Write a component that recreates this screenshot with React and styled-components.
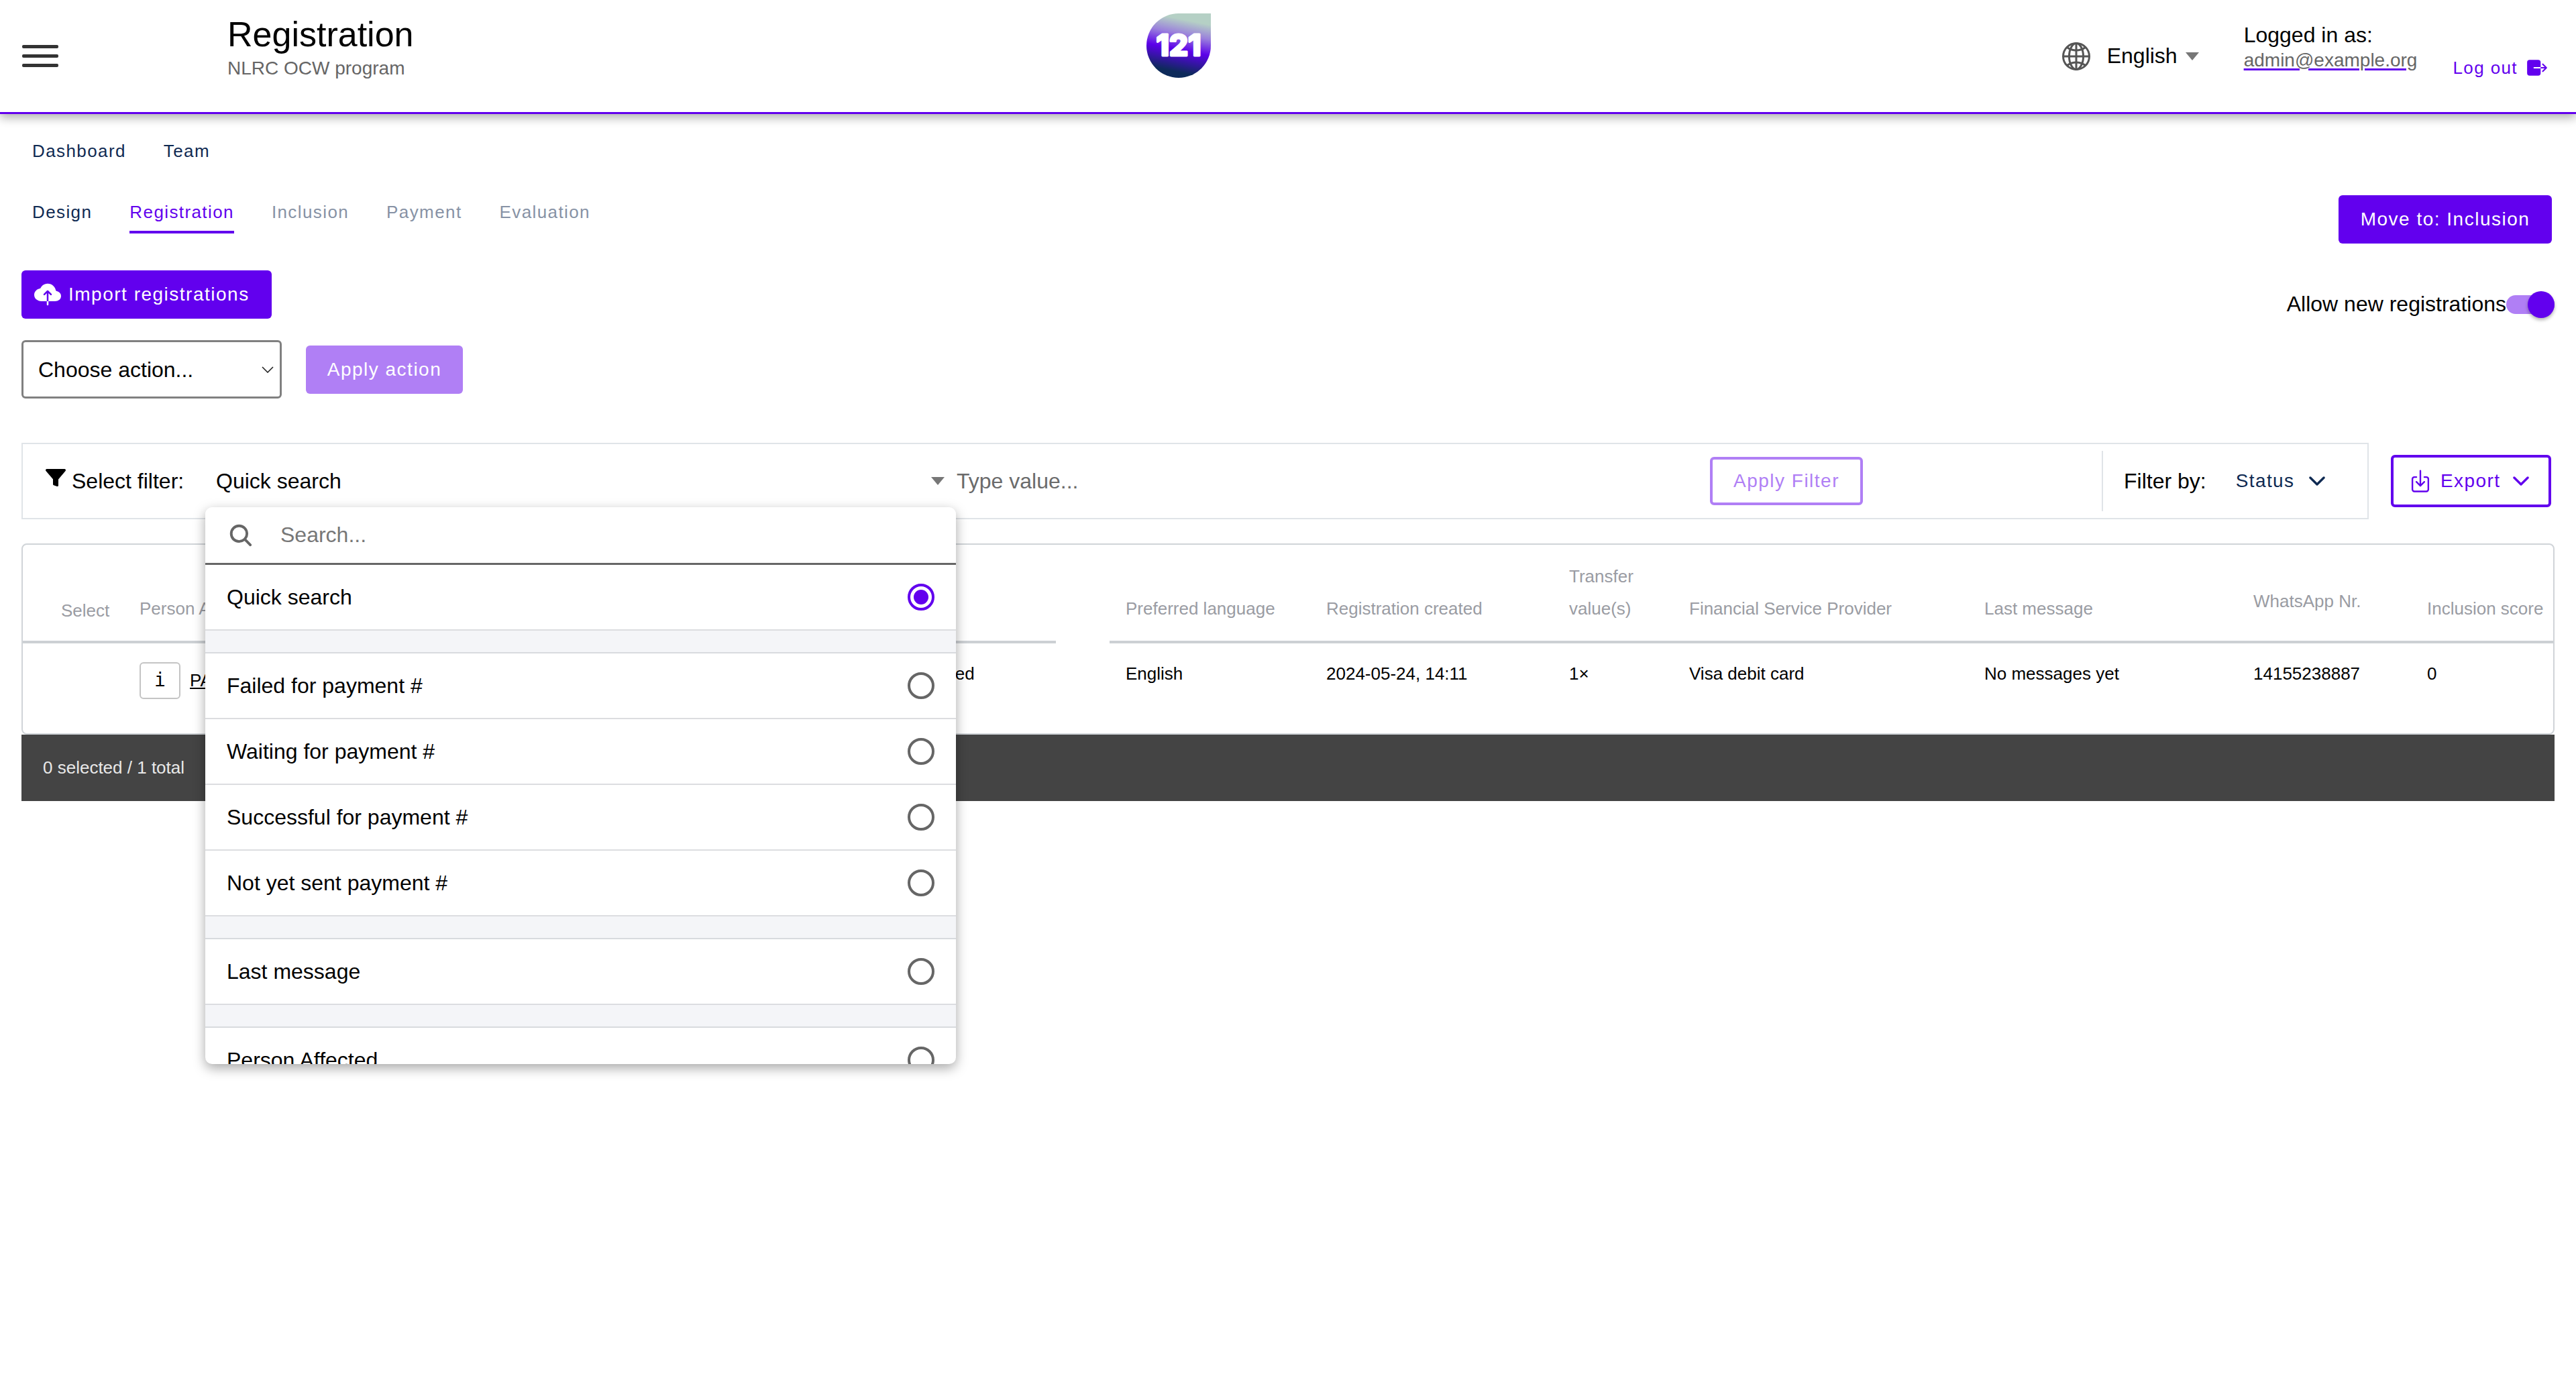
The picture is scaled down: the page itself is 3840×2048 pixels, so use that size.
import React from "react";
import styled, { createGlobalStyle } from "styled-components";
import {
  IoGlobeOutline,
  IoExit,
  IoCloudUpload,
  IoFunnel,
  IoSearch,
  IoChevronDown,
  IoDownloadOutline,
} from "react-icons/io5";

const PURPLE = "#6200ee";
const LIGHT_PURPLE = "#b07ff5";
const NAVY = "#0f2a52";

const selectArrow = encodeURIComponent(
  '<svg xmlns="http://www.w3.org/2000/svg" viewBox="0 0 18 10"><path d="M1 1l8 8 8-8" fill="none" stroke="#222" stroke-width="1.6"/></svg>'
);

const GlobalStyle = createGlobalStyle`
  html, body {
    margin: 0;
    background: #fff;
    font-family: "Liberation Sans", Arial, sans-serif;
    color: #000;
  }
  * { box-sizing: border-box; }
`;

const Page = styled.div`
  min-height: 2048px;
`;

/* header */
const Header = styled.header`
  display: flex;
  align-items: center;
  height: 170px;
  padding: 0 41px 0 33px;
  border-bottom: 3px solid ${PURPLE};
  box-shadow: 0 5px 14px rgba(0, 0, 0, 0.33);
`;
const Burger = styled.div`
  display: flex;
  flex-direction: column;
  gap: 9px;
  width: 54px;
`;
const BurgerBar = styled.span`
  height: 5px;
  border-radius: 2px;
  background: #333;
`;
const TitleBlock = styled.div`
  align-self: flex-start;
  margin: 21px 0 0 252px;
  width: 1370px;
`;
const Title = styled.h1`
  margin: 0;
  font-weight: normal;
  font-size: 52px;
  line-height: 60px;
`;
const Subtitle = styled.div`
  margin-top: 5px;
  font-size: 28px;
  line-height: 32px;
  color: #666;
`;
const LogoWrap = styled.svg`
  align-self: flex-start;
  margin-top: 20px;
  width: 96px;
  height: 96px;
  flex: none;
`;
const Lang = styled.div`
  display: flex;
  align-items: center;
  margin-left: auto;
  font-size: 32px;
  color: #000;
  svg {
    font-size: 48px;
    color: #555;
    margin-right: 22px;
  }
`;
const Caret = styled.span`
  width: 0;
  height: 0;
  margin-left: ${(p) => p.$gap || 12}px;
  border-left: 10px solid transparent;
  border-right: 10px solid transparent;
  border-top: 12px solid #777;
`;
const Account = styled.div`
  align-self: flex-start;
  margin: 34px 0 0 67px;
`;
const LoggedIn = styled.div`
  font-size: 32px;
  line-height: 36px;
`;
const Email = styled.a`
  display: block;
  margin-top: 2px;
  font-size: 28px;
  line-height: 36px;
  color: #666;
  text-decoration: underline ${PURPLE} 3px;
  text-underline-offset: 3px;
`;
const LogOut = styled.a`
  align-self: flex-start;
  display: flex;
  align-items: center;
  gap: 12px;
  margin: 84px 0 0 53px;
  font-size: 26px;
  line-height: 32px;
  letter-spacing: 1.4px;
  color: ${PURPLE};
  svg {
    font-size: 34px;
  }
`;

/* page content */
const Main = styled.main`
  padding: 0 32px;
`;
const NavRow = styled.nav`
  display: flex;
  gap: 56px;
  margin-top: 39px;
  padding-left: 16px;
`;
const NavLink = styled.a`
  font-size: 26px;
  line-height: 32px;
  letter-spacing: 1.4px;
  color: ${NAVY};
`;
const TabsRow = styled.div`
  display: flex;
  justify-content: space-between;
  margin-top: 50px;
  padding: 0 4px 0 16px;
`;
const Tabs = styled.div`
  display: flex;
  gap: 56px;
  padding-top: 9px;
`;
const Tab = styled.a`
  height: 48px;
  padding-bottom: 12px;
  font-size: 26px;
  line-height: 32px;
  letter-spacing: 1.4px;
  color: ${(p) => (p.$active ? PURPLE : p.$done ? NAVY : "#8792a5")};
  border-bottom: 4px solid ${(p) => (p.$active ? PURPLE : "transparent")};
`;
const Button = styled.button`
  display: inline-flex;
  align-items: center;
  justify-content: ${(p) => (p.$icon ? "flex-start" : "center")};
  width: ${(p) => p.$width}px;
  height: 72px;
  padding: 0 0 0 ${(p) => (p.$icon ? 19 : 0)}px;
  border: 0;
  border-radius: 6px;
  background: ${(p) => (p.$disabled ? LIGHT_PURPLE : PURPLE)};
  color: #fff;
  font-family: inherit;
  font-size: 28px;
  letter-spacing: 1.5px;
  svg {
    font-size: 40px;
    margin-right: 11px;
  }
`;
const ActionsRow = styled.div`
  display: flex;
  justify-content: space-between;
  align-items: flex-start;
  margin-top: 40px;
`;
const ActionsColumn = styled.div`
  display: flex;
  flex-direction: column;
  align-items: flex-start;
  gap: 32px;
`;
const SelectRow = styled.div`
  display: flex;
  align-items: center;
  gap: 36px;
`;
const ActionSelect = styled.select`
  appearance: none;
  width: 388px;
  height: 87px;
  padding-left: 22px;
  border: 3px solid #808080;
  border-radius: 6px;
  background: #fff url("data:image/svg+xml,${selectArrow}") no-repeat right 9px center / 18px 10px;
  font-family: inherit;
  font-size: 32px;
  color: #000;
`;
const ToggleRow = styled.label`
  display: flex;
  align-items: center;
  margin-top: 32px;
  font-size: 32px;
`;
const Toggle = styled.span`
  position: relative;
  display: block;
  width: 72px;
  height: 28px;
  border-radius: 14px;
  background: ${LIGHT_PURPLE};
  &::after {
    content: "";
    position: absolute;
    right: 0;
    top: -6px;
    width: 40px;
    height: 40px;
    border-radius: 50%;
    background: ${PURPLE};
    box-shadow: 0 3px 5px rgba(0, 0, 0, 0.3);
  }
`;

/* filter bar */
const FilterRow = styled.div`
  display: flex;
  align-items: center;
  margin-top: 66px;
  padding-right: 5px;
`;
const FilterBar = styled.div`
  position: relative;
  flex: 1;
  display: flex;
  align-items: center;
  height: 114px;
  padding-left: 33px;
  border: 2px solid #e0e4e8;
  font-size: 32px;
`;
const FunnelIcon = styled(IoFunnel)`
  flex: none;
  width: 32px;
  height: 32px;
  margin: -10px 8px 0 0;
`;
const FilterLabel = styled.span`
  flex: none;
  width: 215px;
`;
const QuickSelect = styled.div`
  flex: none;
  display: flex;
  align-items: center;
  justify-content: space-between;
  width: 1086px;
`;
const ValueInput = styled.span`
  flex: 1;
  margin-left: 18px;
  color: #6b6b6b;
`;
const ApplyFilter = styled.button`
  flex: none;
  width: 228px;
  height: 72px;
  margin-right: 356px;
  border: 4px solid ${LIGHT_PURPLE};
  border-radius: 6px;
  background: #fff;
  color: ${LIGHT_PURPLE};
  font-family: inherit;
  font-size: 28px;
  letter-spacing: 1.5px;
`;
const FilterBy = styled.div`
  flex: none;
  display: flex;
  align-items: center;
  width: 396px;
  height: 90px;
  padding-left: 31px;
  border-left: 2px solid #e0e4e8;
`;
const StatusSelect = styled.span`
  display: flex;
  align-items: center;
  gap: 16px;
  margin-left: 44px;
  font-size: 28px;
  letter-spacing: 1.4px;
  color: ${NAVY};
  svg {
    font-size: 36px;
  }
`;
const ExportButton = styled.button`
  flex: none;
  display: flex;
  align-items: center;
  width: 239px;
  height: 78px;
  margin-left: 33px;
  padding: 0 0 0 21px;
  border: 4px solid ${PURPLE};
  border-radius: 6px;
  background: #fff;
  color: ${PURPLE};
  font-family: inherit;
  font-size: 28px;
  letter-spacing: 1.4px;
  svg:first-child {
    font-size: 38px;
    margin-right: 11px;
  }
  svg:last-child {
    font-size: 36px;
    margin-left: 13px;
  }
`;

/* dropdown */
const Dropdown = styled.div`
  position: absolute;
  z-index: 5;
  left: 272px;
  top: 94px;
  width: 1119px;
  height: 830px;
  overflow: hidden;
  border-radius: 10px;
  background: #fff;
  box-shadow: 0 6px 18px rgba(0, 0, 0, 0.35);
`;
const SearchRow = styled.div`
  display: flex;
  align-items: center;
  gap: 39px;
  height: 86px;
  padding-left: 33px;
  border-bottom: 3px solid #666;
  color: #777;
  svg {
    font-size: 40px;
    color: #666;
  }
`;
const Option = styled.div`
  display: flex;
  align-items: center;
  justify-content: space-between;
  height: 98px;
  padding: 0 32px;
  border-bottom: 2px solid #dcdde0;
`;
const Spacer = styled.div`
  height: 34px;
  background: #f4f5f8;
  border-bottom: 2px solid #d8dade;
`;
const Radio = styled.span`
  position: relative;
  display: block;
  width: 40px;
  height: 40px;
  border: 4px solid ${(p) => (p.$checked ? PURPLE : "#666")};
  border-radius: 50%;
  &::after {
    content: "";
    display: ${(p) => (p.$checked ? "block" : "none")};
    position: absolute;
    inset: 5px;
    border-radius: 50%;
    background: ${PURPLE};
  }
`;

/* table */
const TableCard = styled.div`
  margin-top: 36px;
  border: 2px solid #d0d4d8;
  border-radius: 8px;
`;
const TableGrid = styled.div`
  display: grid;
  grid-template-columns: 150px 1119px 271px 80px 299px 362px 179px 440px 401px 259px 212px;
`;
const HeadCell = styled.div`
  display: flex;
  align-items: flex-end;
  height: 147px;
  padding: 0 0 ${(p) => p.$bottom ?? 24}px ${(p) => p.$left ?? 24}px;
  border-bottom: 4px solid ${(p) => (p.$gap ? "transparent" : "#ccd0d4")};
  font-size: 26px;
  line-height: 48px;
  color: #9a9ca3;
`;
const Cell = styled.div`
  display: flex;
  align-items: ${(p) => (p.$center ? "center" : "flex-start")};
  height: 134px;
  padding: ${(p) => (p.$center ? "0 0 0 24px" : "29px 0 0 24px")};
  font-size: 26px;
  line-height: 32px;
`;
const InfoButton = styled.span`
  display: flex;
  align-items: center;
  justify-content: center;
  width: 61px;
  height: 55px;
  margin: -24px 14px 0 0;
  border: 2px solid #c4c4c4;
  border-radius: 6px;
  font-family: "DejaVu Sans Mono", monospace;
  font-size: 28px;
`;
const PersonLink = styled.a`
  margin-top: -24px;
  text-decoration: underline;
`;
const FooterBar = styled.div`
  display: flex;
  align-items: center;
  height: 99px;
  padding-left: 32px;
  background: #444;
  color: #e8e8e8;
  font-size: 26px;
`;

function Logo() {
  return (
    <LogoWrap viewBox="0 0 96 96">
      <defs>
        <linearGradient id="logoFill" x1="0.62" y1="0" x2="0.42" y2="1">
          <stop offset="0.1" stopColor="#b5d0c5" />
          <stop offset="0.32" stopColor="#9a80dc" />
          <stop offset="0.56" stopColor="#5c00ea" />
          <stop offset="0.9" stopColor="#0d2a5a" />
        </linearGradient>
      </defs>
      <path d="M48 0H96V48A48 48 0 1 1 48 0Z" fill="url(#logoFill)" />
      <text
        x="48"
        y="63"
        textAnchor="middle"
        fontFamily="Inter, sans-serif"
        fontWeight="800"
        fontSize="44"
        fill="#fff"
        stroke="#fff"
        strokeWidth="3"
        strokeLinejoin="round"
      >
        121
      </text>
    </LogoWrap>
  );
}

const headColumns = [
  { label: "Select", left: 57, bottom: 21 },
  { label: "Person Affected" },
  { label: "Status" },
  { label: "", gap: true },
  { label: "Preferred language" },
  { label: "Registration created" },
  { label: "Transfer value(s)" },
  { label: "Financial Service Provider" },
  { label: "Last message" },
  { label: "WhatsApp Nr.", bottom: 35 },
  { label: "Inclusion score" },
];

const rowValues = [
  "Registered",
  "",
  "English",
  "2024-05-24, 14:11",
  "1×",
  "Visa debit card",
  "No messages yet",
  "14155238887",
  "0",
];

const paymentOptions = [
  "Failed for payment #",
  "Waiting for payment #",
  "Successful for payment #",
  "Not yet sent payment #",
];

export default function App() {
  return (
    <Page>
      <GlobalStyle />
      <Header>
        <Burger>
          <BurgerBar />
          <BurgerBar />
          <BurgerBar />
        </Burger>
        <TitleBlock>
          <Title>Registration</Title>
          <Subtitle>NLRC OCW program</Subtitle>
        </TitleBlock>
        <Logo />
        <Lang>
          <IoGlobeOutline />
          English
          <Caret />
        </Lang>
        <Account>
          <LoggedIn>Logged in as:</LoggedIn>
          <Email>admin@example.org</Email>
        </Account>
        <LogOut>
          Log out
          <IoExit />
        </LogOut>
      </Header>
      <Main>
        <NavRow>
          <NavLink>Dashboard</NavLink>
          <NavLink>Team</NavLink>
        </NavRow>
        <TabsRow>
          <Tabs>
            <Tab $done>Design</Tab>
            <Tab $active>Registration</Tab>
            <Tab>Inclusion</Tab>
            <Tab>Payment</Tab>
            <Tab>Evaluation</Tab>
          </Tabs>
          <Button $width={318}>Move to: Inclusion</Button>
        </TabsRow>
        <ActionsRow>
          <ActionsColumn>
            <Button $width={373} $icon>
              <IoCloudUpload />
              Import registrations
            </Button>
            <SelectRow>
              <ActionSelect>
                <option>Choose action...</option>
              </ActionSelect>
              <Button $width={234} $disabled>
                Apply action
              </Button>
            </SelectRow>
          </ActionsColumn>
          <ToggleRow>
            Allow new registrations
            <Toggle />
          </ToggleRow>
        </ActionsRow>
        <FilterRow>
          <FilterBar>
            <FunnelIcon />
            <FilterLabel>Select filter:</FilterLabel>
            <QuickSelect>
              Quick search
              <Caret />
            </QuickSelect>
            <ValueInput>Type value...</ValueInput>
            <ApplyFilter>Apply Filter</ApplyFilter>
            <FilterBy>
              Filter by:
              <StatusSelect>
                Status
                <IoChevronDown />
              </StatusSelect>
            </FilterBy>
            <Dropdown>
              <SearchRow>
                <IoSearch />
                Search...
              </SearchRow>
              <Option>
                Quick search
                <Radio $checked />
              </Option>
              <Spacer />
              {paymentOptions.map((label) => (
                <Option key={label}>
                  {label}
                  <Radio />
                </Option>
              ))}
              <Spacer />
              <Option>
                Last message
                <Radio />
              </Option>
              <Spacer />
              <Option>
                Person Affected
                <Radio />
              </Option>
            </Dropdown>
          </FilterBar>
          <ExportButton>
            <IoDownloadOutline />
            Export
            <IoChevronDown />
          </ExportButton>
        </FilterRow>
        <TableCard>
          <TableGrid>
            {headColumns.map((col, i) => (
              <HeadCell key={i} $left={col.left} $bottom={col.bottom} $gap={col.gap}>
                <span>{col.label}</span>
              </HeadCell>
            ))}
            <Cell />
            <Cell $center>
              <InfoButton>i</InfoButton>
              <PersonLink>PA #1</PersonLink>
            </Cell>
            {rowValues.map((value, i) => (
              <Cell key={i}>{value}</Cell>
            ))}
          </TableGrid>
        </TableCard>
        <FooterBar>0 selected / 1 total</FooterBar>
      </Main>
    </Page>
  );
}
